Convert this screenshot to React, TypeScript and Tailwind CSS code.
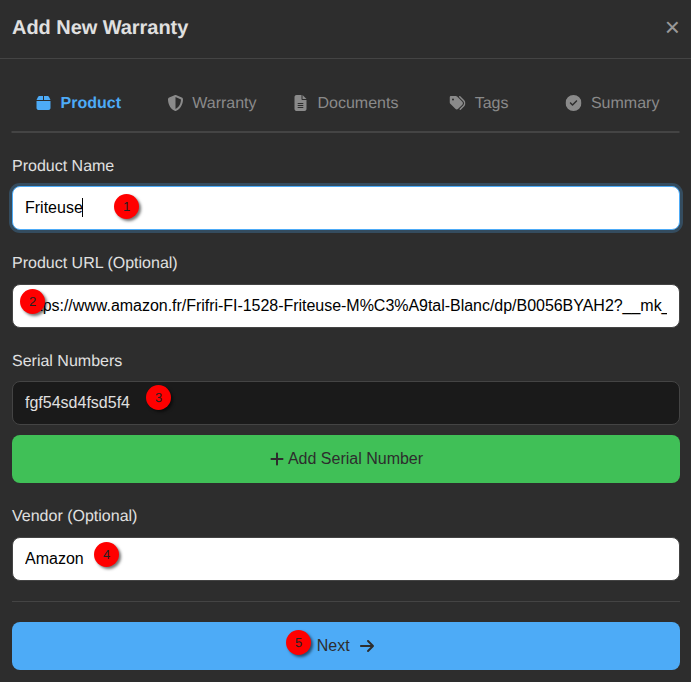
import {
  FaArrowRight,
  FaBox,
  FaCircleCheck,
  FaFileLines,
  FaPlus,
  FaShieldHalved,
  FaTags,
} from "react-icons/fa6";

const steps = [
  { label: "Product", icon: FaBox, active: true },
  { label: "Warranty", icon: FaShieldHalved, active: false },
  { label: "Documents", icon: FaFileLines, active: false },
  { label: "Tags", icon: FaTags, active: false },
  { label: "Summary", icon: FaCircleCheck, active: false },
];

const Badge = ({ n, className }: { n: number; className: string }) => (
  <div
    className={`absolute w-[25px] h-[25px] rounded-full bg-[#ff0000] text-[#222] text-[13px] flex items-center justify-center shadow-[2px_2px_3px_rgba(0,0,0,0.55)] ${className}`}
  >
    {n}
  </div>
);

const App = () => {
  return (
    <div className="w-[691px] h-[682px] overflow-hidden bg-[#2d2d2d] text-[#e0e0e0] font-['Liberation_Sans',Arial,sans-serif] [text-rendering:geometricPrecision]">
      {/* Header */}
      <div className="h-[59px] px-3 flex items-center justify-between border-b border-[#444]">
        <h2 className="text-[20px] font-bold leading-none -mt-[2px] tracking-[-0.05px]">
          Add New Warranty
        </h2>
        <span className="text-[26px] leading-none text-[#999] -mt-1 -mr-px">
          ×
        </span>
      </div>

      <div className="pl-3 pr-[11px]">
        {/* Steps */}
        <div className="mt-[25px] h-[49px] flex border-b-2 border-[#444] -translate-x-[0.5px]">
          {steps.map((s) => {
            const Icon = s.icon;
            return (
              <div
                key={s.label}
                className={`flex-1 flex items-start justify-center gap-[9px] pt-[11px] text-[16px] leading-[18px] ${
                  s.active ? "text-[#4dabf7] font-bold" : "text-[#8a8a8a]"
                }`}
              >
                <Icon className="h-4 w-auto" />
                <span>{s.label}</span>
              </div>
            );
          })}
        </div>

        {/* Product name */}
        <label className="block mt-[25px] text-[16px] leading-[18px]">
          Product Name
        </label>
        <div className="relative mt-[10px]">
          <input
            readOnly
            value="Friteuse"
            className="w-full h-[44px] px-3 rounded-lg bg-white text-black text-[16px] border border-[#4dabf7] ring-[3px] ring-[#4dabf7]/25 outline-none"
          />
          <div className="absolute left-[70px] top-[12px] w-px h-[19px] bg-black" />
          <Badge n={1} className="left-[102px] top-[8px]" />
        </div>

        {/* Product url */}
        <label className="block mt-[25px] text-[16px] leading-[18px]">
          Product URL (Optional)
        </label>
        <div className="relative mt-[11px]">
          <input
            readOnly
            value="https://www.amazon.fr/Frifri-FI-1528-Friteuse-M%C3%A9tal-Blanc/dp/B0056BYAH2?__mk_fr_FR=ÅMÅŽÕÑ"
            className="w-full h-[44px] px-3 rounded-lg bg-white text-black text-[16px] tracking-[-0.03px] border border-[#444] outline-none"
          />
          <Badge n={2} className="left-[8px] top-[5px]" />
        </div>

        {/* Serial numbers */}
        <label className="block mt-[25px] text-[16px] leading-[18px]">
          Serial Numbers
        </label>
        <div className="relative mt-[10px]">
          <input
            readOnly
            value="fgf54sd4fsd5f4"
            className="w-full h-[44px] px-3 rounded-lg bg-[#1a1a1a] text-[#e0e0e0] text-[16px] border border-[#444] outline-none"
          />
          <Badge n={3} className="left-[134px] top-[4px]" />
        </div>
        <button className="mt-[10px] w-full h-[48px] rounded-lg bg-[#40c057] text-[#2d2d2d] text-[16px] flex items-center justify-center gap-[3px]">
          <FaPlus className="h-4 w-auto" />
          Add Serial Number
        </button>

        {/* Vendor */}
        <label className="block mt-[25px] text-[16px] leading-[18px]">
          Vendor (Optional)
        </label>
        <div className="relative mt-[11px]">
          <input
            readOnly
            value="Amazon"
            className="w-full h-[44px] px-3 rounded-lg bg-white text-black text-[16px] border border-[#444] outline-none"
          />
          <Badge n={4} className="left-[82px] top-[5px]" />
        </div>

        <div className="mt-[20px] border-t border-[#444]" />

        {/* Next */}
        <div className="relative mt-[20px]">
          <button className="w-full h-[48px] rounded-lg bg-[#4dabf7] text-[#2d2d2d] text-[16px] flex items-center justify-center gap-[9.6px]">
            Next
            <FaArrowRight className="h-4 w-auto" />
          </button>
          <Badge n={5} className="left-[274px] top-[8px]" />
        </div>
      </div>
    </div>
  );
};

export default App;
